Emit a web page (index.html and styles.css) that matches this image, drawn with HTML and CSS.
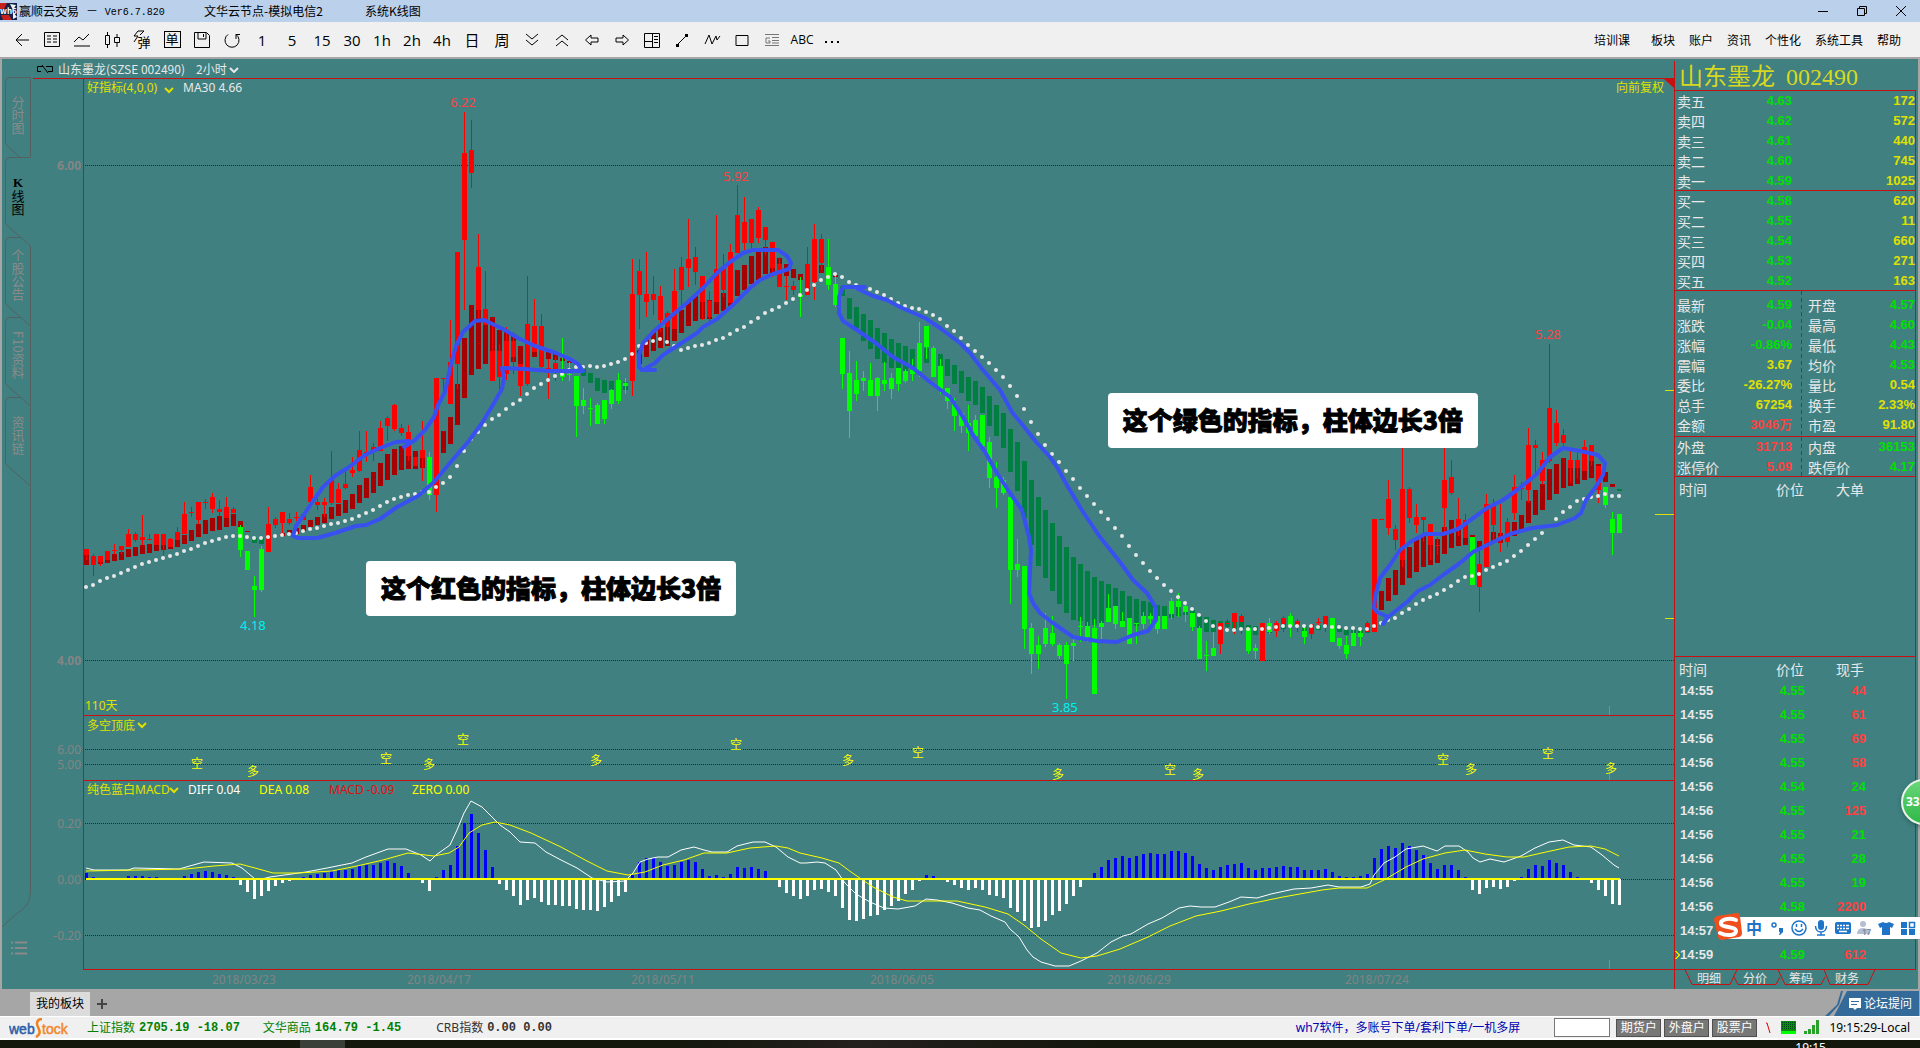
FILE: index.html
```html
<!DOCTYPE html>
<html lang="zh-CN">
<head>
<meta charset="utf-8">
<meta name="viewport" content="width=device-width, initial-scale=1">
<title>赢顺云交易</title>
<link rel="stylesheet" href="styles.css">
</head>
<body>
<header class="titlebar">
  <svg class="applogo" viewBox="0 0 17 17" width="17" height="17"><path fill="#14224a" d="M0 0h17v17H0z"/><path fill="#c8201c" d="M0 0h7l-3 6H0zM1 12h8l3 5H3z"/><path fill="#f4f4f4" d="M10 1l6 1-3 5zM13 9l4 5-4 2z"/><text x="0" y="11" font-size="8" font-weight="700" fill="#fff">wh6</text></svg>
  <span class="app">赢顺云交易</span><span class="ver">－ <code>Ver6.7.820</code></span><span class="node">文华云节点-模拟电信2</span><span>系统K线图</span>
  <div class="winbtns">
    <button type="button" aria-label="最小化"><svg viewBox="0 0 12 12" width="12" height="12"><path d="M1 6.500h10"/></svg></button>
    <button type="button" aria-label="还原"><svg viewBox="0 0 12 12" width="12" height="12"><path d="M1.500 3.500h7v7h-7zM3.500 3.500v-2h7v7h-2"/></svg></button>
    <button type="button" aria-label="关闭"><svg viewBox="0 0 12 12" width="12" height="12"><path d="M1 1l10 10M11 1L1 11"/></svg></button>
  </div>
</header>

<div class="toolbar">
  <div class="tools">
    <button type="button" aria-label="返回"><svg viewBox="0 0 18 18"><path d="M3 9h13M9 3L3 9l6 6"/></svg></button>
    <button type="button" aria-label="报价"><svg viewBox="0 0 18 18"><path d="M1.500 1.500h15v14h-15zM4 5h4M10 5h4M4 8h4M10 8h4M4 11h4M10 11h4"/></svg></button>
    <button type="button" aria-label="分时"><svg viewBox="0 0 18 18"><path d="M1 15h16M1 11l5-5 4 3 6-6"/></svg></button>
    <button type="button" aria-label="K线"><svg viewBox="0 0 18 18"><path d="M2.500 4.500h4v9h-4zM4.500 1v3M4.500 14v3M11.500 6.500h5v5h-5zM14 3v3M14 12v4"/></svg></button>
    <button type="button" class="cjk flash"><svg viewBox="0 0 18 18"><path d="M6 1L2 6h4l-4 6M6 1h6L8 5"/></svg><span>弹</span></button>
    <button type="button" class="cjk"><span class="boxed">单</span></button>
    <button type="button" aria-label="保存"><svg viewBox="0 0 18 18"><path d="M1.500 1.500h12l3 3v12h-15zM5 2v6h8V2M10.500 3v3"/></svg></button>
    <button type="button" aria-label="刷新"><svg viewBox="0 0 18 18"><path d="M5 3.500a7 7 0 1 0 8 0M13 8V3.500h4"/></svg></button>
    <button type="button">1</button><button type="button">5</button><button type="button">15</button><button type="button">30</button><button type="button">1h</button><button type="button">2h</button><button type="button">4h</button>
    <button type="button" class="cjk">日</button><button type="button" class="cjk">周</button>
    <button type="button" aria-label="缩小"><svg viewBox="0 0 18 18"><path d="M3 3l6 5 6-5M3 9l6 5 6-5"/></svg></button>
    <button type="button" aria-label="放大"><svg viewBox="0 0 18 18"><path d="M3 9l6-5 6 5M3 15l6-5 6 5"/></svg></button>
    <button type="button" aria-label="左移"><svg viewBox="0 0 18 18"><path d="M2.500 9L8 4v3h7v4H8v3z"/></svg></button>
    <button type="button" aria-label="右移"><svg viewBox="0 0 18 18"><path d="M15.500 9L10 4v3H3v4h7v3z"/></svg></button>
    <button type="button" aria-label="分栏"><svg viewBox="0 0 18 18"><path d="M1.500 2.500h15v14h-15zM9.500 2v14M2 10.500h7M11 5.500h4M11 8.500h4M11 11.500h4"/></svg></button>
    <button type="button" aria-label="直线"><svg viewBox="0 0 18 18"><path d="M4 14L14 4"/><path fill="#000" d="M3 13h3v3H3zM12 3h3v3h-3z" stroke="none"/></svg></button>
    <button type="button" aria-label="波浪"><svg viewBox="0 0 18 18"><path d="M2 13l4-9 3 9 4-8 1 4 3-4"/></svg></button>
    <button type="button" aria-label="矩形"><svg viewBox="0 0 18 18"><path d="M3 4.500h12v10H3z"/></svg></button>
    <button type="button" aria-label="网格"><svg viewBox="0 0 18 18"><path stroke="#777" d="M2 3.500h14M2 14.500h14M9 6.500h7M9 9.500h7M9 12h7M7 7H3v5h4v-2H5"/></svg></button>
    <button type="button" class="abc">ABC</button>
    <button type="button" aria-label="更多"><svg viewBox="0 0 18 18"><path fill="#000" stroke="none" d="M2 10h2v2H2zM8 10h2v2H8zM14 10h2v2h-2z"/></svg></button>
  </div>
  <nav class="menu"><a class="first" href="#">培训课</a><a href="#">板块</a><a href="#">账户</a><a href="#">资讯</a><a href="#">个性化</a><a href="#">系统工具</a><a href="#">帮助</a></nav>
</div>

<main class="desk">
  <nav class="sidetabs">
    <svg class="tablines" viewBox="2 59 31 930" aria-hidden="true">
      <path d="M30.500 157V77.500H9q-3.500 0-3.500 4V144L20 157.500M30.500 157.500H9q-3.500 0-3.500 4V224L30.500 246M20 237.500H9q-3.500 0-3.500 4V304L30.500 326M20 317.500H9q-3.500 0-3.500 4V384L30.500 406M20 397.500H9q-3.500 0-3.500 4V464L30.500 486M30.500 246V890C30 910 20 908 2 927"/>
      <path class="listicon" d="M11 942.500h2M15 942.500h12M11 948h2M15 948h12M11 953.500h2M15 953.500h12"/>
    </svg>
    <button type="button">分时图</button>
    <button type="button" class="on"><b>K</b>线图</button>
    <button type="button">个股公告</button>
    <button type="button">F10资料</button>
    <button type="button">资讯链</button>
  </nav>

  <section class="charts">
    <div class="charthead">
      <svg viewBox="0 0 16 10" width="16" height="10"><path fill="none" stroke="#000" d="M6 2.500H.5v5H4M9 2.500h6.500v5H11"/><path stroke="#000" d="M5 1l6 8"/></svg>
      <span>山东墨龙(SZSE 002490)</span><button type="button">2小时<svg viewBox="0 0 10 6" width="10" height="6"><path fill="none" stroke="#e8e8e8" stroke-width="2" d="M1 1l4 4 4-4"/></svg></button>
    </div>
    <div class="pricepane">
      <svg class="plot" viewBox="33 79 1641 637">
        <path class="grid" d="M85 165.500H1674M85 660.500H1674"/>
        <path class="frame" d="M83.500 79V716M83 715.500H1674"/>
        <path fill="#c81010" d="M1664 79h10v9z"/>
        <path class="mark" d="M1665 390.500h9M1655 514.500h19M1665 618.500h9"/>
        <path class="tick" d="M1609.500 706v9"/>
        <g id="indicator"></g>
        <g id="candles"></g>
        <g id="average"></g>
        <g class="loops">
          <path d="M409 441L396 442 380 448 365 455 349 467 335 476 323 487 313 501 303 516 296 526 293 536 298 538 317 538 335 533 356 526 366 525 380 519 397 507 418 496 434 482 449 464 468 442 482 423 494 403 502 389 504 378 502 368 525 369 549 371 583 371 578 364 570 359 556 353 535 346 518 338 501 328 484 320 475 321 463 332 456 346 451 364 445 392 438 405 434 417 425 430 415 440 404 447"/>
          <path d="M655 370L642 370 639 367 639 355 643 343 653 332 670 317 688 302 703 288 717 273 730 262 743 253 753 250 778 250 787 256 791 263 789 269 773 274 760 280 750 288 733 305 717 319 703 327 697 333 680 344 663 355 655 363 646 368"/>
          <path d="M865 287L843 287 839 297 839 313 843 321 857 330 877 344 893 357 913 368 930 382 950 397 963 417 973 435 985 452 997 473 1010 493 1022 510 1029 537 1031 550 1029 593 1033 603 1040 613 1053 623 1073 637 1097 641 1117 642 1133 635 1148 631 1156 620 1156 608 1147 593 1133 580 1120 562 1100 537 1083 512 1068 487 1057 467 1050 457 1037 443 1025 428 1012 412 1000 390 983 370 970 353 960 343 940 328 925 318 900 307 887 300 873 296 858 289"/>
          <path d="M1383 624L1388 617 1377 612 1374 608 1375 597 1380 578 1390 565 1400 550 1412 541 1425 534 1443 534 1458 529 1472 519 1487 508 1503 500 1517 490 1537 474 1550 457 1563 448 1580 451 1598 455 1605 463 1603 475 1595 488 1586 500 1581 513 1575 518 1557 525 1532 528 1510 534 1487 545 1473 552 1460 563 1443 575 1430 585 1418 591 1407 602 1388 617"/>
        </g>
        <g class="num">
          <text class="axis bold" x="81" y="170">6.00</text><text class="axis bold" x="81" y="665">4.00</text>
          <text class="yel" x="87" y="92">好指标(4,0,0)</text><path class="chev" d="M165 88l4 4 4-4"/><text x="183" y="92">MA30 4.66</text>
          <text class="yel" x="1616" y="92">向前复权</text>
          <text class="red" x="450" y="107">6.22</text><text class="red" x="723" y="181">5.92</text><text class="red" x="1535" y="339">5.28</text>
          <text class="cyan" x="240" y="630">4.18</text><text class="cyan" x="1052" y="712">3.85</text>
          <text class="yel" x="85" y="710">110天</text>
        </g>
      </svg>
      <p class="note note-red">这个红色的指标，柱体边长3倍</p>
      <p class="note note-green">这个绿色的指标，柱体边长3倍</p>
    </div>
    <svg class="plot" viewBox="33 716 1641 65">
      <path class="grid" d="M85 749.500H1674M85 764.500H1674"/>
      <path class="frame" d="M83.500 716V781M83 780.500H1674"/>
      <path class="tick" d="M1609.500 772v8"/>
      <g class="num">
        <text class="yel" x="87" y="730">多空顶底</text><path class="chev" d="M138 723l4 4 4-4"/>
        <text class="axis" x="81" y="754">6.00</text><text class="axis" x="81" y="769">5.00</text>
      </g>
      <g id="signals" class="signals"></g>
    </svg>
    <svg class="plot" viewBox="33 781 1641 208">
      <path class="grid" d="M85 823.500H1674M85 879.500H1674M85 935.500H1674"/>
      <path class="frame" d="M83.500 781V970M83 969.500H1674"/>
      <path class="tick" d="M1609.500 960v9"/>
      <g id="macd"></g>
      <polyline class="diff" points="86,868 94,870 128,870 134,868 179,869 204,862 232,863 242,868 255,879 262,879 270,877 306,872 327,868 352,863 366,857 388,849 406,849 421,855 430,861 436,855 450,845 457,830 464,813 471,801 482,807 492,817 500,825 510,832 520,842 535,843 546,852 561,860 577,868 592,878 607,882 625,881 633,873 640,862 648,859 658,857 668,857 681,850 694,847 704,850 712,852 727,852 737,846 753,842 765,842 776,847 788,857 800,863 806,863 817,862 825,863 836,870 845,883 856,894 870,902 884,908 898,909 915,906 926,899 937,900 952,903 968,908 980,910 991,916 1005,922 1010,929 1019,937 1027,950 1033,957 1041,962 1055,966 1069,966 1081,961 1097,953 1111,942 1123,936 1131,934 1148,924 1162,918 1179,908 1190,906 1201,907 1215,907 1229,902 1241,897 1257,898 1271,894 1294,889 1311,888 1328,885 1339,887 1361,887 1370,884 1374,875 1384,863 1395,857 1406,849 1423,846 1437,851 1445,846 1459,846 1468,852 1473,858 1480,862 1490,859 1504,862 1521,856 1535,848 1549,842 1563,840 1574,845 1591,847 1602,855 1614,865 1619,868"/>
      <polyline class="dea" points="86,871 138,870 186,869 214,866 240,864 255,868 273,873 298,873 332,871 357,866 383,860 408,853 434,856 449,853 459,847 469,833 482,825 495,822 510,825 531,833 561,847 587,861 607,871 628,875 645,872 663,865 684,860 704,853 727,853 750,848 776,846 788,848 800,853 822,858 839,863 851,872 873,887 893,897 907,901 957,901 985,907 1008,914 1024,925 1041,939 1061,953 1081,958 1097,956 1120,949 1148,937 1170,926 1196,916 1221,911 1249,904 1283,897 1322,890 1339,888 1367,888 1384,880 1406,867 1423,859 1445,853 1465,850 1485,854 1507,857 1524,857 1546,852 1569,847 1591,846 1605,849 1619,856"/>
      <path fill="#ff0" d="M86 878h1534v2H86z"/>
      <g class="num">
        <text class="yel" x="87" y="794">纯色蓝白MACD</text><path class="chev" d="M170 788l4 4 4-4"/>
        <text class="white" x="188" y="794">DIFF 0.04</text><text class="byel" x="259" y="794">DEA 0.08</text><text class="dred" x="329" y="794">MACD -0.09</text><text class="byel" x="412" y="794">ZERO 0.00</text>
        <text class="axis" x="81" y="828">0.20</text><text class="axis" x="81" y="884">0.00</text><text class="axis" x="81" y="940">-0.20</text>
        <text class="date" x="212" y="984">2018/03/23</text><text class="date" x="407" y="984">2018/04/17</text><text class="date" x="631" y="984">2018/05/11</text><text class="date" x="870" y="984">2018/06/05</text><text class="date" x="1107" y="984">2018/06/29</text><text class="date" x="1345" y="984">2018/07/24</text>
      </g>
    </svg>
  </section>

  <aside class="quote">
    <h1><span>山东墨龙</span><span>002490</span></h1>
    <div class="panel">
      <table class="book">
        <tbody>
          <tr><th scope="row">卖五</th><td class="g">4.63</td><td>172</td></tr>
          <tr><th scope="row">卖四</th><td class="g">4.62</td><td>572</td></tr>
          <tr><th scope="row">卖三</th><td class="g">4.61</td><td>440</td></tr>
          <tr><th scope="row">卖二</th><td class="g">4.60</td><td>745</td></tr>
          <tr><th scope="row">卖一</th><td class="g">4.59</td><td>1025</td></tr>
        </tbody>
      </table>
      <table class="book">
        <tbody>
          <tr><th scope="row">买一</th><td class="g">4.58</td><td>620</td></tr>
          <tr><th scope="row">买二</th><td class="g">4.55</td><td>11</td></tr>
          <tr><th scope="row">买三</th><td class="g">4.54</td><td>660</td></tr>
          <tr><th scope="row">买四</th><td class="g">4.53</td><td>271</td></tr>
          <tr><th scope="row">买五</th><td class="g">4.52</td><td>163</td></tr>
        </tbody>
      </table>
      <table class="stats">
        <tbody>
          <tr><th scope="row">最新</th><td class="g">4.59</td><th scope="row">开盘</th><td class="g">4.57</td></tr>
          <tr><th scope="row">涨跌</th><td class="g">-0.04</td><th scope="row">最高</th><td class="g">4.60</td></tr>
          <tr><th scope="row">涨幅</th><td class="g">-0.86%</td><th scope="row">最低</th><td class="g">4.43</td></tr>
          <tr><th scope="row">震幅</th><td>3.67</td><th scope="row">均价</th><td class="g">4.53</td></tr>
          <tr><th scope="row">委比</th><td>-26.27%</td><th scope="row">量比</th><td>0.54</td></tr>
          <tr><th scope="row">总手</th><td>67254</td><th scope="row">换手</th><td>2.33%</td></tr>
          <tr><th scope="row">金额</th><td class="r">3046万</td><th scope="row">市盈</th><td>91.80</td></tr>
        </tbody>
      </table>
      <table class="stats short">
        <tbody>
          <tr><th scope="row">外盘</th><td class="r">31713</td><th scope="row">内盘</th><td class="g">36153</td></tr>
          <tr><th scope="row">涨停价</th><td class="r">5.09</td><th scope="row">跌停价</th><td class="g">4.17</td></tr>
        </tbody>
      </table>
      <div class="bigdeals">
        <table class="ticks"><thead><tr><th>时间</th><th>价位</th><th>大单</th></tr></thead></table>
      </div>
      <table class="ticks">
        <thead><tr><th>时间</th><th>价位</th><th>现手</th></tr></thead>
        <tbody>
          <tr><td>14:55</td><td class="g">4.55</td><td class="r">44</td></tr>
          <tr><td>14:55</td><td class="g">4.55</td><td class="r">61</td></tr>
          <tr><td>14:56</td><td class="g">4.55</td><td class="r">69</td></tr>
          <tr><td>14:56</td><td class="g">4.55</td><td class="r">58</td></tr>
          <tr><td>14:56</td><td class="g">4.54</td><td class="g">24</td></tr>
          <tr><td>14:56</td><td class="g">4.55</td><td class="r">125</td></tr>
          <tr><td>14:56</td><td class="g">4.55</td><td class="g">21</td></tr>
          <tr><td>14:56</td><td class="g">4.55</td><td class="g">28</td></tr>
          <tr><td>14:56</td><td class="g">4.55</td><td class="g">19</td></tr>
          <tr><td>14:56</td><td class="g">4.58</td><td class="r">2200</td></tr>
          <tr><td>14:57</td><td></td><td></td></tr>
          <tr class="last"><td>14:59</td><td class="g">4.59</td><td class="r">612</td></tr>
        </tbody>
      </table>
    </div>
    <div class="foottabs">
      <svg viewBox="0 0 244 17" width="244" height="17" aria-hidden="true"><path d="M0 .5h10l7 15h38l7-15h179M59 8l4 7.500h38l4-7.500M103 .5l7 15h36l4-7.500M149 .5l6 15h38l7-15"/></svg>
      <button type="button">明细</button><button type="button">分价</button><button type="button">筹码</button><button type="button">财务</button>
    </div>
  </aside>
</main>

<div class="boards">
  <button type="button" class="board">我的板块</button><button type="button" class="plus" aria-label="添加板块"><svg viewBox="0 0 12 12" width="12" height="12"><path stroke="#444" stroke-width="2" d="M6 1v10M1 6h10"/></svg></button>
  <a class="forum" href="#"><svg viewBox="0 0 12 12" width="12" height="12"><path fill="#fff" d="M0 0h12v10H8l-2 2-2-2H0z"/><path stroke="#336a99" d="M2 3.500h8M2 6.500h6"/></svg>论坛提问</a>
</div>

<footer class="status">
  <svg class="ws" viewBox="0 0 60 20" width="60" height="20"><text x="0" y="16" font-size="14" fill="#2b5fa8" stroke="#2b5fa8" stroke-width=".5">web</text><path fill="none" stroke="#f08020" stroke-width="2.500" d="M33 1c-5 0-6 4-4 8s3 7-2 10"/><text x="33" y="16" font-size="14" fill="#f0882a" stroke="#f0882a" stroke-width=".5">tock</text></svg>
  <span class="idx green"><i>上证指数</i><b>2705.19 -18.07</b></span>
  <span class="idx green"><i>文华商品</i><b>164.79 -1.45</b></span>
  <span class="idx"><i>CRB指数</i><b>0.00 0.00</b></span>
  <a class="promo" href="#">wh7软件，多账号下单/套利下单/一机多屏</a>
  <input type="text" aria-label="代码">
  <button type="button">期货户</button><button type="button">外盘户</button><button type="button">股票户</button>
  <svg class="lamps" viewBox="0 0 56 16" width="56" height="16"><path fill="none" stroke="#d00" d="M1 3h1l3 10"/><path fill="#0b8a0b" d="M16 1h15v10H16z"/><path fill="#0f0" d="M16 11h15v3H16z"/><path stroke="#042" stroke-dasharray="1 1" d="M17 2.500h13M17 4.500h13M17 6.500h13M17 8.500h13"/><path fill="#2ba02b" d="M39 11h3v3h-3zM43 9h3v5h-3zM47 5h3v9h-3zM51 0h3v14h-3z"/></svg>
  <time>19:15:29-Local</time>
</footer>
<div class="taskbar"><span>19:15</span></div>

<div class="ime">
  <svg class="sogou" viewBox="0 0 28 28" width="28" height="28"><path fill="#ee4f1c" d="M3 3l20-3q3 0 3 3l2 17q0 3-3 4L8 27q-3 0-4-3L0 7q0-3 3-4z"/><path fill="none" stroke="#fff" stroke-width="4" stroke-linecap="round" d="M22 7C14 4 6 7 7 11s15 2 15 7-10 5-16 2"/></svg>
  <b>中</b>
  <svg viewBox="0 0 16 16" width="16" height="16"><circle cx="4" cy="5" r="2" fill="none" stroke="#1f74c8" stroke-width="1.500"/><path fill="#1f74c8" d="M9 8h4v4l-3 3h-1l1-3H9z"/></svg>
  <svg viewBox="0 0 16 16" width="16" height="16"><circle cx="8" cy="8" r="7" fill="none" stroke="#1f74c8" stroke-width="1.500"/><path fill="none" stroke="#1f74c8" stroke-width="1.500" d="M5.500 4v3M10.500 4v3M4 9q4 5 8 0"/></svg>
  <svg viewBox="0 0 16 16" width="16" height="16"><rect x="5" y="0" width="6" height="10" rx="3" fill="#1f74c8"/><path fill="none" stroke="#1f74c8" stroke-width="1.500" d="M2.500 6c0 8 11 8 11 0M8 12v3M4 15h8"/></svg>
  <svg viewBox="0 0 16 16" width="16" height="16"><rect y="2" width="16" height="12" rx="2" fill="#1f74c8"/><path stroke="#fff" stroke-width="1.500" d="M2 5.500h2M5 5.500h2M8 5.500h2M11 5.500h3M2 8.500h2M5 8.500h2M8 8.500h2M11 8.500h3M4 11.500h8"/></svg>
  <svg viewBox="0 0 16 16" width="16" height="16"><circle cx="6" cy="4" r="3" fill="#b4bfd2"/><path fill="#b4bfd2" d="M0 14q0-6 6-6t7 6z"/><text x="5" y="15" font-size="8" font-weight="700" fill="#7c8cab">17</text></svg>
  <svg viewBox="0 0 16 16" width="16" height="16"><path fill="#1f74c8" d="M5 2q3 2 6 0l5 2-2 4-2-1v8H4V7L2 8 0 4z"/></svg>
  <svg viewBox="0 0 16 16" width="16" height="16"><path fill="#1f74c8" d="M1 2h6v6H1zM1 9h6v6H1zM9 9h6v6H9z"/><path fill="none" stroke="#1f74c8" stroke-width="1.500" d="M9.500 2.500h5v5h-5z"/></svg>
</div>
<div class="ball">33</div>
<script src="chart.js"></script>
</body>
</html>
```
FILE: styles.css
```css
* { box-sizing: border-box; }
body {
  margin: 0;
  min-height: 100vh;
  display: flex;
  flex-direction: column;
  position: relative;
  overflow-x: hidden;
  background: #14170c;
  color: #000;
  font: 12px/16px "Noto Sans", "Noto Sans CJK SC", sans-serif;
}
button { font: inherit; color: inherit; background: none; border: 0; padding: 0; margin: 0; }
a { color: inherit; text-decoration: none; }
p, h1 { margin: 0; font-weight: 400; }
table { border-collapse: separate; border-spacing: 0; width: 100%; table-layout: fixed; }
th, td { padding: 0; font-weight: 400; }

.titlebar { height: 22px; background: #bad0eb; display: flex; align-items: center; font-family: "Noto Sans CJK SC", sans-serif; }
.applogo { margin-right: 2px; }
.app { margin-right: 7px; }
.ver { width: 118px; }
.ver code { margin-left: 4px; font: 10px/16px "Liberation Mono", monospace; }
.node { width: 161px; }
.winbtns { margin-left: auto; display: flex; }
.winbtns button { width: 39px; height: 22px; display: grid; place-items: center; }
.winbtns svg { fill: none; stroke: #000; }

.toolbar { height: 37px; background: #f0f0f0; border-bottom: 2px solid #a6a6a6; display: flex; justify-content: space-between; align-items: center; padding: 0 19px 0 7px; }
.tools { display: flex; }
.tools button { width: 30px; height: 30px; display: grid; place-items: center; font: 15px/20px "Open Sans", "Noto Sans CJK SC", sans-serif; }
.tools svg { width: 18px; height: 18px; fill: none; stroke: #000; }
.tools .cjk { font-size: 15px; }
.tools .flash { position: relative; font-size: 13px; padding-left: 4px; }
.tools .flash svg { position: absolute; left: 5px; top: 5px; }
.tools .flash span { padding-top: 4px; }
.tools .abc { font-size: 12px; }
.boxed { border: 1px solid #000; width: 17px; height: 17px; font-size: 13px; line-height: 14px; }
.menu { display: flex; gap: 14px; font-family: "Noto Sans CJK SC", sans-serif; }
.menu .first { margin-right: 7px; }

.desk { background: #408080; border: solid #a6a6a6; border-width: 0 2px; display: grid; grid-template-columns: 31px minmax(0, 1fr) 244px; }
.sidetabs { position: relative; padding-top: 16px; display: flex; flex-direction: column; color: #8a8a8a; }
.tablines { position: absolute; left: 0; top: 0; width: 31px; height: 930px; fill: none; stroke: #566060; }
.tablines .listicon { stroke: #8a8a8a; stroke-width: 2; }
.sidetabs button { position: relative; height: 80px; width: 31px; writing-mode: vertical-rl; text-align: center; font: 13px/30px "Noto Sans CJK SC", sans-serif; }
.sidetabs .on { color: #000; }
.sidetabs b { font-family: "Liberation Serif", serif; text-orientation: upright; }

.charts { display: flex; flex-direction: column; min-width: 0; }
.charthead { height: 20px; border-bottom: 1px solid #c81010; display: flex; align-items: center; gap: 5px; padding-left: 4px; color: #e8e8e8; font-family: "Noto Sans CJK SC", sans-serif; }
.charthead button { margin-left: 6px; }
.charthead button svg { margin-left: 2px; vertical-align: 1px; }
.pricepane { position: relative; }
.plot { display: block; width: 100%; height: auto; }
.grid { stroke: #800000; stroke-dasharray: 1 1; shape-rendering: crispEdges; }
.frame { fill: none; stroke: #c81010; shape-rendering: crispEdges; }
.mark { stroke: #e0e000; }
.tick { stroke: #8a8a8a; }
.chev { fill: none; stroke: #e0e000; stroke-width: 2; }
.rise { fill: #f00; }
.fall { fill: #0f0; }
.rise-bar { fill: #a80000; }
.fall-bar { fill: #008040; }
.dot { fill: #e8e8e8; }
#candles, #indicator, #macd { shape-rendering: crispEdges; }
.loops path { fill: none; stroke: #3850f0; stroke-width: 4; stroke-linejoin: round; stroke-linecap: round; }
.num text { font-size: 12px; fill: #e8e8e8; }
.num .axis { fill: #858585; text-anchor: end; }
.num .bold { font-weight: 700; }
.num .date { fill: #808484; }
.num .yel { fill: #e0e000; }
.num .byel { fill: #ff0; }
.num .white { fill: #fff; }
.num .red { fill: #ff4040; font-size: 13px; }
.num .dred { fill: #e01010; }
.num .cyan { fill: #00f0f0; font-size: 13px; }
.signals text { font: 12px "Noto Sans CJK SC", sans-serif; fill: #ff0; text-anchor: middle; }
.macd-up { fill: #00f; }
.macd-down { fill: #fff; }
.diff { fill: none; stroke: #fff; }
.dea { fill: none; stroke: #ff0; }
.note { position: absolute; padding: 0 15px; height: 55px; border-radius: 4px; background: #fff; color: #000; font: 900 25px/52px "Noto Sans CJK SC", sans-serif; -webkit-text-stroke: 1px #000; white-space: nowrap; }
.note-red { left: 20.300%; top: 75.700%; }
.note-green { left: 65.500%; top: 49.300%; }

.quote { border-left: 1px solid #c81010; color: #e8e8e8; margin-top: 2px; }
.quote h1 { height: 29px; padding-left: 4px; display: flex; gap: 11px; color: #d8d820; font: 24px/32px "Liberation Serif", "Noto Sans CJK SC", serif; }
.panel { border: 1px solid #c81010; border-left: 0; margin-right: 2px; height: 880px; }
.panel table { font: 14px/20px "Noto Sans CJK SC", sans-serif; }
.panel td { font: 700 13px/20px "Liberation Sans", "Noto Sans CJK SC", sans-serif; text-align: right; color: #e0e000; }
.panel th { text-align: left; padding-left: 2px; }
.panel td.g { color: #00e000; }
.panel td.r { color: #ff4040; }
.panel tr { height: 20px; line-height: 20px; }
.book { background: linear-gradient(#c81010, #c81010) 0 100% / 100% 1px no-repeat; }
.book th { width: 46px; }
.book td:nth-child(2) { width: 71px; }
.stats {
  padding: 4px 0 2px;
  background:
    linear-gradient(#c81010, #c81010) 0 100% / 100% 1px no-repeat,
    repeating-linear-gradient(#c81010 0 4px, transparent 4px 7px) 126px 0 / 1px 100% no-repeat;
}
.stats.short { padding: 0; }
.stats th:first-child { width: 50px; }
.stats td:nth-child(2) { width: 67px; }
.stats th:nth-child(3) { width: 60px; padding-left: 16px; }
.bigdeals { height: 180px; border-bottom: 1px solid #c81010; }
.panel .ticks tbody tr { height: 24px; }
.panel .ticks thead tr { height: 22px; }
.panel .ticks thead th { padding-top: 2px; line-height: 20px; }
.ticks thead th:nth-child(1) { width: 99px; padding-left: 4px; }
.ticks thead th:nth-child(2) { width: 60px; }
.ticks thead th:nth-child(3) { width: 83px; }
.panel .ticks td { color: #e8e8e8; }
.panel .ticks td:nth-child(1) { text-align: left; padding-left: 5px; }
.panel .ticks td:nth-child(2) { padding-right: 29px; }
.panel .ticks td:nth-child(3) { padding-right: 51px; }
.panel .ticks td.g { color: #00e000; }
.panel .ticks td.r { color: #ff4040; }
.panel .ticks .last td:first-child { background: linear-gradient(135deg, transparent 42%, #e0e000 42% 58%, transparent 58%) 0 12px / 5px 4px no-repeat, linear-gradient(45deg, transparent 42%, #e0e000 42% 58%, transparent 58%) 0 8px / 5px 4px no-repeat; }
.foottabs { position: relative; height: 17px; padding-left: 22px; display: flex; gap: 22px; }
.foottabs svg { position: absolute; left: 0; top: -1px; fill: none; stroke: #c81010; }
.foottabs button { position: relative; line-height: 14px; }

.boards { height: 27px; background: #a6a6a6; display: flex; align-items: center; padding: 2px 1px 0 30px; }
.board { height: 24px; padding: 0 6px; background: #dcdcdc; }
.plus { margin-left: 6px; height: 12px; display: grid; }
.forum { margin-left: auto; height: 25px; width: 94px; display: flex; align-items: center; gap: 3px; padding-left: 24px; color: #fff; background: #336a99; clip-path: polygon(0 100%, 12px 55%, 16px 0, 18px 0, 14px 55%, 4px 100%, 9px 100%, 22px 0, 100% 0, 100% 100%); }

.status { height: 24px; background: #f0f0f0; border: solid #fff; border-width: 1px 0 2px; display: flex; align-items: center; padding: 0 10px 0 9px; }
.ws { margin-right: 18px; font-family: "Liberation Sans", sans-serif; }
.idx { display: flex; gap: 4px; margin-right: 23px; color: #333; }
.idx i { font-style: normal; }
.idx b { font: 700 12px/16px "Liberation Mono", monospace; }
.idx.green { color: #008000; }
.idx + .idx + .idx { margin-left: 12px; }
.promo { margin-left: auto; margin-right: 34px; color: #0000b0; }
.status input { width: 56px; height: 19px; border: 1px solid #777; background: #fff; padding: 0 2px; margin-right: 6px; }
.status button { width: 45px; height: 18px; margin-right: 3px; border: 1px solid #505050; background: #777; color: #fff; line-height: 14px; }
.lamps { margin: 0 8px 0 5px; }
.status time { white-space: nowrap; }
.taskbar { height: 8px; overflow: hidden; color: #fff; background: linear-gradient(90deg, #14170c 0 300px, #3a4038 300px 345px, #14170c 345px 680px, #24201e 860px, #14170c 1100px); display: flex; justify-content: flex-end; padding-right: 94px; }
.taskbar span { font-size: 12px; line-height: 16px; }

.ime { position: absolute; right: 0; top: 917px; width: 192px; height: 22px; background: #fff; display: flex; align-items: center; justify-content: space-between; padding: 0 4px 0 18px; color: #1f74c8; font-size: 16px; }
.ime .sogou { position: absolute; left: -14px; top: -4px; }
.ime b { width: 18px; }
.ball { position: absolute; right: -27px; top: 779px; width: 46px; height: 46px; border: 2px solid #e8f4e8; border-radius: 50%; background: linear-gradient(#6ad678, #2fb848); color: #fff; font-weight: 700; line-height: 42px; padding-left: 3px; box-shadow: 0 2px 4px #20404080; }
```
FILE: chart.js
```javascript
// One entry per bar: direction, then high, body top, body bottom, low,
// indicator top, indicator bottom, moving average.
const bars = `
r549,549,555,560,555,565,587 r554,556,565,576,556,565,585 r556,556,562,566,562,564,581 r551,551,560,560,560,563,578
r544,550,550,554,554,561,576 r546,546,550,554,552,560,573 r529,534,547,547,549,557,570 r532,534,540,542,547,556,567
r515,537,540,545,545,554,564 r534,539,539,540,544,553,562 r534,534,545,545,545,551,560 r534,534,545,555,545,550,558
r538,539,547,547,547,549,556 r527,532,540,540,540,547,554 r502,514,534,534,535,544,551 r507,512,512,517,530,541,549
r502,502,520,524,524,537,546 r499,502,502,509,520,534,543 r493,497,509,513,518,531,541 r500,509,512,516,516,530,539
r497,507,518,518,518,527,537 r507,509,513,513,514,526,536 g525,527,550,557,521,527,536 g551,551,570,570,531,532,537
g576,586,590,617,538,543,538 g546,549,590,592,538,544,538 r507,524,552,552,0,0,537 r517,519,525,528,0,0,536
r512,512,523,537,533,536,535 r513,519,523,525,530,533,534 r512,517,517,521,528,534,533 r514,514,520,520,525,531,531
r475,487,502,502,520,527,529 r496,502,505,510,517,525,528 r498,502,505,517,514,523,526 r451,478,503,505,507,519,524
r483,489,503,503,504,516,523 r470,484,488,489,500,513,521 r457,470,473,477,494,509,519 r431,450,471,472,485,503,516
r431,452,452,462,478,498,513 r443,447,451,461,472,493,510 r421,428,451,451,463,486,506 r416,418,426,441,454,480,502
r404,405,429,431,449,475,499 r424,428,433,436,446,470,497 r425,432,456,461,456,469,495 r457,457,466,466,451,469,494
r421,450,458,481,458,468,492 g452,457,495,500,0,0,492 r378,378,495,512,0,0,487 r378,378,378,391,431,453,483
r320,362,404,404,417,444,477 r252,252,364,389,384,425,466 r112,153,240,310,338,398,451 r120,150,173,188,305,375,439
r234,267,310,318,310,369,432 r271,309,325,325,320,364,425 r326,351,381,381,317,351,419 r344,351,377,389,330,351,415
r327,341,374,380,330,341,409 r332,341,357,374,334,362,404 r364,364,386,396,346,364,400 r276,324,384,386,0,0,394
r299,326,352,352,352,357,388 r314,326,367,369,0,0,384 r359,368,368,399,351,359,380 r357,363,370,381,354,360,376
g338,374,377,381,358,361,374 g362,374,374,381,361,363,370 g376,376,406,437,0,0,367 g388,400,406,414,368,376,367
g398,408,408,426,373,383,366 g403,405,424,424,378,391,367 g400,400,419,424,380,393,366 g389,390,404,409,381,390,364
g373,380,401,404,0,0,362 g378,383,386,394,382,390,359 r259,294,381,396,0,0,354 r259,271,295,329,350,364,346
r252,294,302,317,339,357,343 r276,294,300,315,332,351,341 r286,296,320,332,328,348,339 r311,313,327,343,327,346,342
r269,291,329,329,329,341,346 r257,267,290,307,310,333,350 r219,259,268,287,302,326,348 r247,257,272,285,296,321,346
r276,276,302,320,302,319,345 r291,301,317,321,300,319,343 r215,269,302,302,302,314,340 r254,269,290,297,293,311,338
r244,252,303,303,302,306,334 r185,215,253,253,270,296,330 r197,222,243,250,265,290,327 r219,219,243,248,256,284,322
r207,210,238,243,252,280,318 r227,227,240,255,247,274,313 r242,242,268,277,268,273,310 r257,264,287,287,258,264,307
r276,286,286,300,264,276,303 r281,286,290,295,269,278,299 g277,295,297,317,274,280,295 r247,264,295,295,0,0,290
r224,239,282,300,0,0,285 r234,239,263,270,265,273,280 g239,267,285,290,0,0,277 g275,284,305,307,275,277,274
g338,338,374,389,286,296,277 g351,373,411,438,298,319,282 g361,380,394,401,307,328,285 g371,378,381,391,314,341,287
g363,380,396,396,320,349,289 g377,378,396,411,328,359,292 g362,380,384,391,333,363,295 g373,378,389,399,339,368,299
g368,368,384,391,343,368,303 g369,371,381,383,346,371,306 g359,370,374,381,349,368,308 g322,343,371,377,0,0,309
g326,326,347,359,348,363,312 g346,348,377,377,0,0,315 g359,366,389,394,354,366,319 g388,388,401,409,359,376,326
g398,403,416,431,365,384,331 g413,413,426,433,371,393,338 g405,423,433,451,377,401,345 g415,420,436,436,381,405,351
g415,415,446,446,387,413,357 g437,442,478,488,396,426,363 g462,477,488,508,405,436,370 g477,480,493,495,413,448,377
g497,497,570,604,429,472,386 g539,564,570,577,442,491,396 g566,566,629,649,461,518,409 g623,628,654,674,480,545,422
g636,645,654,669,497,566,434 g613,628,644,647,510,578,445 g616,633,644,646,523,591,454 g643,645,656,659,536,604,462
g642,645,664,699,547,613,471 g639,643,646,661,557,620,479 g617,626,626,642,564,621,488 g622,626,637,642,571,626,496
g619,628,694,694,577,625,504 g621,623,627,639,581,623,512 g594,608,622,622,584,608,519 g606,606,624,629,588,606,528
g612,621,627,627,591,621,536 g618,618,644,644,596,618,546 g623,623,623,644,599,626,555 g612,616,624,629,601,616,563
g613,616,619,627,602,618,571 g616,616,629,634,605,616,578 g616,616,629,629,606,616,585 g598,601,614,619,610,618,591
g593,601,607,617,607,616,597 g604,606,612,622,612,615,603 g613,613,627,631,610,613,609 g626,628,659,659,616,628,615
g641,655,655,671,617,632,621 g632,648,656,656,620,632,626 r623,623,644,654,621,623,628 r619,623,623,628,621,627,630
r613,613,622,634,622,629,630 r614,616,622,634,622,629,629 g628,628,651,654,625,628,629 g644,648,651,659,626,635,629
r623,623,661,661,0,0,629 g618,623,632,634,627,633,628 r621,623,631,637,629,631,627 r616,618,624,632,624,629,626
g613,616,626,637,0,0,626 r619,621,625,632,0,0,626 g625,631,637,644,626,631,626 r624,624,634,639,0,0,626
r618,622,622,626,625,630,627 r616,616,625,632,625,627,626 g618,618,642,642,0,0,627 g638,638,646,649,628,632,627
g636,645,654,659,630,635,628 g628,633,646,646,630,633,628 g629,633,637,646,630,633,629 r621,623,632,632,630,633,629
r519,519,632,632,0,0,626 r519,519,519,519,591,610,623 r480,499,528,535,578,601,620 r525,529,540,550,570,595,618
r440,489,560,567,560,585,613 r487,489,518,523,547,578,609 r504,517,525,533,539,572,604 r517,517,520,542,536,567,600
r524,524,545,560,545,565,597 r537,545,545,555,539,563,594 r440,480,508,533,527,554,590 r460,477,493,495,520,548,586
r498,519,530,536,528,546,581 r514,520,538,538,538,545,577 g537,537,585,585,535,537,576 r550,564,587,612,541,550,574
r494,504,567,567,0,0,570 r499,505,525,543,532,543,567 r504,536,536,552,533,543,564 r518,522,542,547,0,0,561
r475,487,513,520,522,536,556 r482,488,488,500,515,530,551 r428,445,490,503,501,523,545 r440,445,448,473,490,515,539
r452,460,481,484,484,510,533 r344,408,461,463,469,500,526 r410,423,443,446,464,494,519 r429,435,443,446,458,488,512
r448,460,468,483,468,486,507 r453,460,468,478,468,484,501 r440,447,471,471,471,480,499 r445,445,461,466,461,478,497
r466,466,490,503,464,467,496 g487,487,505,508,472,482,494 g512,519,533,555,484,487,496 g514,514,533,533,489,491,496`.trim().split(/\s+/);

const macd = [6,2,0,0,0,0,3,3,3,2,2,0,0,0,3,5,7,8,7,5,4,2,-6,-13,-20,-17,-12,-7,-4,-2,0,2,4,5,6,8,9,9,10,13,14,14,16,18,16,13,6,0,-4,-12,
  2,9,14,33,56,65,46,29,12,-5,-11,-17,-26,-21,-19,-23,-26,-26,-27,-27,-30,-31,-31,-32,-28,-23,-17,-13,4,17,21,21,17,13,14,17,19,17,10,3,4,2,5,12,11,12,10,8,0,-8,
  -14,-17,-20,-17,-11,-10,-13,-17,-29,-41,-42,-40,-37,-36,-31,-27,-22,-15,-11,-2,4,3,0,-3,-6,-9,-11,-9,-11,-16,-17,-19,-29,-33,-42,-49,-48,-42,-36,-32,-25,-17,-8,0,6,12,19,21,23,21,
  23,25,26,25,25,28,28,26,23,15,11,9,12,14,15,16,11,9,11,11,12,13,12,12,9,9,9,10,7,3,2,2,3,5,21,30,33,31,36,33,29,24,16,10,14,14,9,2,-11,-15,
  -9,-8,-10,-8,-2,2,10,14,13,19,16,14,7,2,0,-4,-11,-17,-25,-26];

const signals = [["空",197,763],["多",253,771],["空",386,758],["多",429,764],["空",463,739],["多",596,760],["空",736,744],["多",848,760],
  ["空",918,752],["多",1058,774],["空",1170,769],["多",1198,774],["空",1443,759],["多",1471,769],["空",1548,753],["多",1611,768]];

const rect = (cls, x, y, w, h) => `<rect class="${cls}" x="${x}" y="${y}" width="${w}" height="${h}"/>`;
const isRising = i => i < 24 || (i > 25 && i < 71) || (i > 78 && i < 108) || (i > 184 && i < 219);

let candles = "", indicator = "", average = "", histogram = "";
bars.forEach((bar, i) => {
  const x = 86 + 7 * i;
  const cls = bar[0] === "r" ? "rise" : "fall";
  const [high, top, bottom, low, barTop, barBottom, ma] = bar.slice(1).split(",").map(Number);
  if (barBottom) indicator += rect(isRising(i) ? "rise-bar" : "fall-bar", x - 2, barTop, 5, barBottom - barTop);
  candles += rect(cls, x, high, 1, Math.max(1, low - high)) + rect(cls, x - 2, top, 5, Math.max(1, bottom - top));
  average += `<circle class="dot" cx="${x}" cy="${ma}" r="2"/>`;
  const m = macd[i];
  if (m > 0) histogram += rect("macd-up", x - 1, 879 - m, 3, m);
  if (m < 0) histogram += rect("macd-down", x - 1, 879, 3, -m);
});
document.getElementById("indicator").innerHTML = indicator;
document.getElementById("candles").innerHTML = candles;
document.getElementById("average").innerHTML = average;
document.getElementById("macd").innerHTML = histogram;
document.getElementById("signals").innerHTML = signals.map(([t, x, y]) => `<text x="${x}" y="${y + 5}">${t}</text>`).join("");
```
